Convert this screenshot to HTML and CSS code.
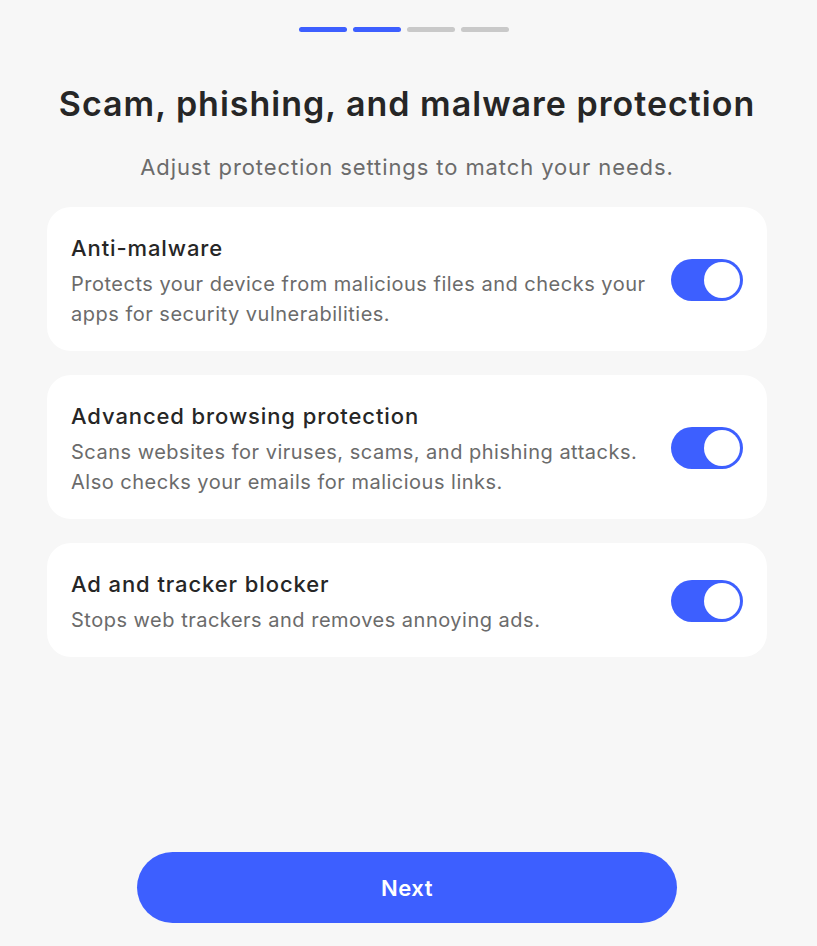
FILE: index.html
```html
<!DOCTYPE html>
<html lang="en">
<head>
<meta charset="utf-8">
<title>Scam, phishing, and malware protection</title>
<link rel="stylesheet" href="styles.css">
</head>
<body>
<main class="screen">
  <div class="steps">
    <span class="step step-done"></span>
    <span class="step step-done"></span>
    <span class="step"></span>
    <span class="step"></span>
  </div>
  <h1 class="title">Scam, phishing, and malware protection</h1>
  <p class="subtitle">Adjust protection settings to match your needs.</p>

  <section class="options">
    <div class="option">
      <div class="option-text">
        <h2 class="option-title">Anti-malware</h2>
        <p class="option-desc">Protects your device from malicious files and checks your apps for security vulnerabilities.</p>
      </div>
      <button class="toggle toggle-on" aria-pressed="true"><span class="knob"></span></button>
    </div>
    <div class="option">
      <div class="option-text">
        <h2 class="option-title">Advanced browsing protection</h2>
        <p class="option-desc">Scans websites for viruses, scams, and phishing attacks. Also checks your emails for malicious links.</p>
      </div>
      <button class="toggle toggle-on" aria-pressed="true"><span class="knob"></span></button>
    </div>
    <div class="option">
      <div class="option-text">
        <h2 class="option-title">Ad and tracker blocker</h2>
        <p class="option-desc">Stops web trackers and removes annoying ads.</p>
      </div>
      <button class="toggle toggle-on" aria-pressed="true"><span class="knob"></span></button>
    </div>
  </section>

  <div class="footer">
    <button class="next">Next</button>
  </div>
</main>
</body>
</html>
```
FILE: styles.css
```css
* { box-sizing: border-box; }

html, body {
  margin: 0;
  height: 100%;
  background: #f7f7f7;
}

body {
  font-family: Inter, "Noto Sans", sans-serif;
  color: #262626;
}

.screen {
  width: 720px;
  margin-left: 47px;
  height: 946px;
  display: flex;
  flex-direction: column;
  align-items: center;
  padding-top: 27px;
}

.steps {
  display: flex;
  gap: 6px;
  margin-left: -6px;
}

.step {
  width: 48px;
  height: 5px;
  border-radius: 3px;
  background: #c9c9c9;
}

.step-done { background: #3d5fff; }

.title {
  margin: 50px 0 0;
  font-size: 34px;
  font-weight: 600;
  line-height: 44px;
  letter-spacing: 1px;
  color: #262626;
  white-space: nowrap;
}

.subtitle {
  margin: 26px 0 0;
  font-size: 22px;
  line-height: 30px;
  letter-spacing: 0.9px;
  color: #6b6b6b;
}

.options {
  width: 100%;
  margin-top: 25px;
  display: flex;
  flex-direction: column;
  gap: 24px;
}

.option {
  background: #ffffff;
  border-radius: 24px;
  padding: 24px 24px 22px 24px;
  display: flex;
  align-items: center;
  gap: 24px;
}

.option-text { flex: 1; }

.option-title {
  margin: 0;
  font-size: 22px;
  font-weight: 500;
  line-height: 34px;
  letter-spacing: 0.9px;
  color: #262626;
}

.option-desc {
  margin: 4px 0 0;
  font-size: 20px;
  line-height: 30px;
  letter-spacing: 0.5px;
  color: #6b6b6b;
}

.toggle {
  flex: none;
  width: 72px;
  height: 42px;
  border: none;
  border-radius: 21px;
  padding: 3px;
  background: #c9c9c9;
  display: flex;
  align-items: center;
  justify-content: flex-start;
}

.toggle-on {
  background: #3d5fff;
  justify-content: flex-end;
}

.knob {
  width: 36px;
  height: 36px;
  border-radius: 50%;
  background: #ffffff;
}

.footer {
  margin-top: auto;
  padding-bottom: 23px;
}

.next {
  width: 540px;
  height: 71px;
  border: none;
  border-radius: 36px;
  background: #3d5fff;
  color: #ffffff;
  font-family: Inter, "Noto Sans", sans-serif;
  font-size: 22px;
  font-weight: 600;
  letter-spacing: 0.5px;
}
```
